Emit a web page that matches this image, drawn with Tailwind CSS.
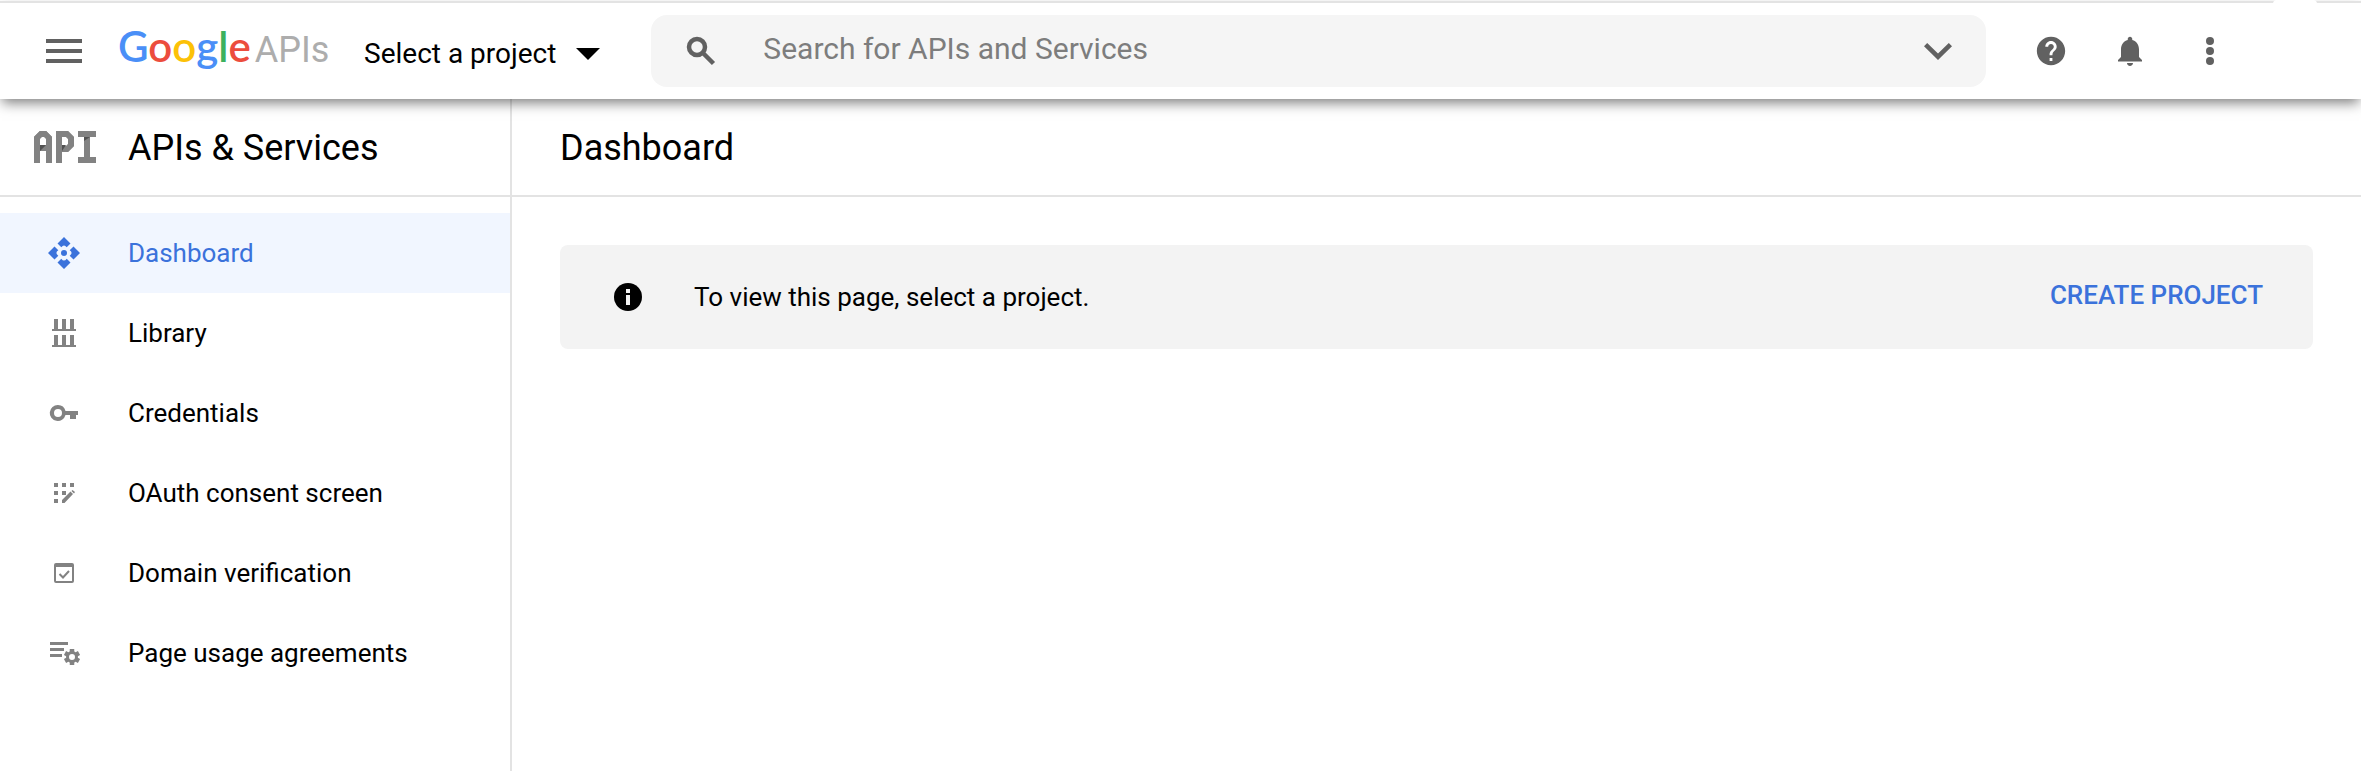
<!DOCTYPE html>
<html lang="en">
<head>
<meta charset="utf-8">
<title>APIs &amp; Services – Dashboard</title>
<script src="https://cdn.jsdelivr.net/npm/@tailwindcss/browser@4"></script>
</head>
<body class="flex min-h-screen flex-col bg-white font-['Roboto',sans-serif] text-[26px] leading-8 text-black">

<header class="relative z-10 mt-px flex items-center border-t-2 border-[#e3e3e3] bg-white py-3 pr-[119px] pl-[46px] shadow-[0_6px_12px_-2px_rgba(0,0,0,0.5)]">
  <span class="absolute -top-[3px] right-11 h-1 w-11 rounded-t-full bg-white"></span>
  <button type="button" aria-label="Main menu" class="shrink-0">
    <svg class="block h-6 w-9 fill-[#616161]" viewBox="0 0 36 24"><path d="M0 0h36v4H0zM0 10h36v4H0zM0 20h36v4H0z"/></svg>
  </button>
  <a href="#" class="ml-9 flex w-[212px] shrink-0 items-baseline gap-1 pb-1.5 font-['Lato',sans-serif] text-[42px] leading-[50px]">
    <span class="font-semibold"><span class="text-[#4a8ff7]">G</span><span class="text-[#ec4d3d]">o</span><span class="text-[#fcc107]">o</span><span class="text-[#4a8ff7]">g</span><span class="text-[#3cb15d]">l</span><span class="text-[#ec4d3d]">e</span></span>
    <span class="font-['Roboto',sans-serif] text-[36px] text-[#adadad]">APIs</span>
  </a>
  <button type="button" class="ml-[34px] flex shrink-0 items-center gap-5 pt-1.5 text-[28px]">
    Select a project
    <svg class="h-3 w-6" viewBox="0 0 24 12"><path d="M0 0h24L12 12z"/></svg>
  </button>
  <form class="ml-[51px] flex h-[72px] min-w-0 flex-1 items-center rounded-2xl bg-[#f5f5f5] pr-[34px] pl-8" role="search">
    <label for="search" class="shrink-0">
      <svg class="block size-9" viewBox="0 0 36 36" fill="none" stroke="#616161" stroke-width="4.500" role="img" aria-label="Search"><circle cx="14" cy="14" r="8"/><path d="M19.500 19.500l11 11"/></svg>
    </label>
    <input id="search" type="text" placeholder="Search for APIs and Services" class="ml-11 min-w-0 flex-1 bg-transparent pb-1 text-[30px] leading-10 outline-none placeholder:text-[#7d7d7d]">
    <button type="button" aria-label="Show search options" class="shrink-0">
      <svg class="block h-[18px] w-7 fill-[#616161]" viewBox="0 0 28 18"><path d="M3.200 1L14 11.500 24.800 1 28 4.200 14 18 0 4.200z"/></svg>
    </button>
  </form>
  <div class="ml-8 flex shrink-0 items-center">
    <button type="button" aria-label="Help" class="flex w-20 justify-start pl-4">
      <svg class="size-[34px] fill-[#616161]" viewBox="0 0 24 24"><path d="M12 2C6.480 2 2 6.480 2 12s4.480 10 10 10 10-4.480 10-10S17.520 2 12 2zm1 17h-2v-2h2v2zm2.070-7.750l-.9.92C13.450 12.900 13 13.500 13 15h-2v-.5c0-1.100.45-2.100 1.170-2.830l1.240-1.260c.37-.36.59-.86.59-1.410 0-1.100-.9-2-2-2s-2 .9-2 2H8c0-2.210 1.790-4 4-4s4 1.790 4 4c0 .88-.36 1.680-.93 2.250z"/></svg>
    </button>
    <button type="button" aria-label="Notifications" class="flex w-20 justify-start pl-3.5">
      <svg class="size-9 fill-[#616161]" viewBox="0 0 24 24"><path d="M12 22c1.100 0 2-.9 2-2h-4c0 1.100.89 2 2 2zm6-6v-5c0-3.070-1.640-5.640-4.500-6.320V4c0-.83-.67-1.500-1.500-1.500s-1.500.67-1.500 1.500v.68C7.630 5.360 6 7.920 6 11v5l-2 2v1h16v-1l-2-2z"/></svg>
    </button>
    <button type="button" aria-label="More options" class="flex w-16 justify-center">
      <svg class="h-7 w-2 fill-[#616161]" viewBox="0 0 8 28"><circle cx="4" cy="4" r="4"/><circle cx="4" cy="14" r="4"/><circle cx="4" cy="24" r="4"/></svg>
    </button>
  </div>
</header>

<div class="flex flex-1">
  <aside class="w-[512px] shrink-0 border-r-2 border-[#e3e3e3]">
    <div class="flex h-[98px] items-center border-b-2 border-[#e3e3e3] pl-[34px]">
      <svg class="h-8 w-[62px]" viewBox="0 0 62 32" aria-hidden="true">
        <g fill="none" stroke="#828282" stroke-width="6">
          <path d="M3 32V7l4-4h4l4 4v25M3 17h12"/>
          <path d="M25 32V3h8l4 4v7l-4 4h-8"/>
          <path d="M44 3h18M53 3v26M44 29h18"/>
        </g>
        <path fill="#828282" d="M22 6l4-6h4v6zM0 6l6-6h6l6 6v4H0z"/>
        <path fill="#fff" d="M6 8l2-2h2l2 2v6H6z"/>
        <path fill="#515151" d="M6 14h6l-6 6zM28 14h4l-4 6zM50 6h6l-6 4z"/>
      </svg>
      <span class="ml-8 pt-0.5 text-[36px] leading-10">APIs &amp; Services</span>
    </div>
    <nav class="pt-4">
      <a href="#" aria-current="page" class="flex h-20 items-center gap-[46px] bg-[#f1f6ff] pl-[46px] text-[#3b72db]">
        <svg class="size-9 fill-current" viewBox="0 0 36 36"><path d="M18 2l6.500 6.500-3.800 3.800Q18 8.500 15.300 12.300l-3.800-3.800zM34 18l-6.500 6.500-3.800-3.800Q27.500 18 23.700 15.300l3.800-3.800zM18 34l-6.500-6.500 3.800-3.800Q18 27.500 20.700 23.700l3.800 3.800zM2 18l6.500-6.500 3.800 3.800Q8.500 18 12.300 20.700l-3.800 3.800z"/><circle cx="18" cy="18" r="3"/></svg>
        Dashboard
      </a>
      <a href="#" class="flex h-20 items-center gap-[46px] pl-[46px]">
        <svg class="size-9 fill-[#828282]" viewBox="0 0 36 36"><path d="M8 4h4v10h4V4h4v10h4V4h4v10h2v2H6v-2h2zM8 20h4v10h4V20h4v10h4V20h4v10h2v2H6v-2h2z"/></svg>
        Library
      </a>
      <a href="#" class="flex h-20 items-center gap-[46px] pl-[46px]">
        <svg class="size-9 fill-[#828282]" viewBox="0 0 36 36"><path fill-rule="evenodd" d="M12 10a8 8 0 0 1 7.500 6H32v4h-2v4h-6v-4h-4.500A8 8 0 1 1 12 10zm0 4a4 4 0 1 0 0 8 4 4 0 0 0 0-8z"/></svg>
        Credentials
      </a>
      <a href="#" class="flex h-20 items-center gap-[46px] pl-[46px]">
        <svg class="size-9 fill-[#828282]" viewBox="0 0 36 36"><path d="M8 8h4v4H8zM16 8h4v4h-4zM24 8h4v4h-4zM8 16h4v4H8zM16 16h4v4h-4zM8 24h4v4H8zM16 25l8.500-8.500 2.500 2.500-8.500 9H16zM25.500 16l1-1 2.500 2-1 1.500z"/></svg>
        OAuth consent screen
      </a>
      <a href="#" class="flex h-20 items-center gap-[46px] pl-[46px]">
        <svg class="size-9 fill-[#828282]" viewBox="0 0 36 36"><path fill-rule="evenodd" d="M10 8h16a2 2 0 0 1 2 2v16a2 2 0 0 1-2 2H10a2 2 0 0 1-2-2V10a2 2 0 0 1 2-2zm0 4v14h16V12z"/><path fill="none" stroke="#828282" stroke-width="2" d="M13.500 19l3.500 3.500 6-6.500"/></svg>
        Domain verification
      </a>
      <a href="#" class="flex h-20 items-center gap-[46px] pl-[46px]">
        <svg class="size-9 fill-[#828282]" viewBox="0 0 36 36"><path d="M4 7h18v3H4zM4 13h14v3H4zM4 19h12v3H4z"/><circle cx="26" cy="22" r="4.500" fill="none" stroke="#828282" stroke-width="3"/><path fill="none" stroke="#828282" stroke-width="4.500" d="M26 14v3M26 27v3M19 18l2.700 1.500M30.300 24.500L33 26M19 26l2.700-1.500M30.300 19.500L33 18"/></svg>
        Page usage agreements
      </a>
    </nav>
  </aside>

  <main class="min-w-0 flex-1">
    <div class="flex h-[98px] items-center border-b-2 border-[#e3e3e3] px-12">
      <h1 class="pt-0.5 text-[36px] leading-10">Dashboard</h1>
    </div>
    <section class="mx-12 mt-12 flex h-[104px] items-center rounded-lg bg-[#f3f3f3] pr-[50px] pl-[54px]">
      <svg class="size-7 shrink-0" viewBox="0 0 28 28" aria-hidden="true"><circle cx="14" cy="14" r="14"/><path fill="#f3f3f3" d="M12 6h4v4h-4zM12 12h4v10h-4z"/></svg>
      <p class="ml-[52px]">To view this page, select a project.</p>
      <button type="button" class="ml-auto pb-1 font-medium text-[#3b72db]">CREATE PROJECT</button>
    </section>
  </main>
</div>

</body>
</html>
